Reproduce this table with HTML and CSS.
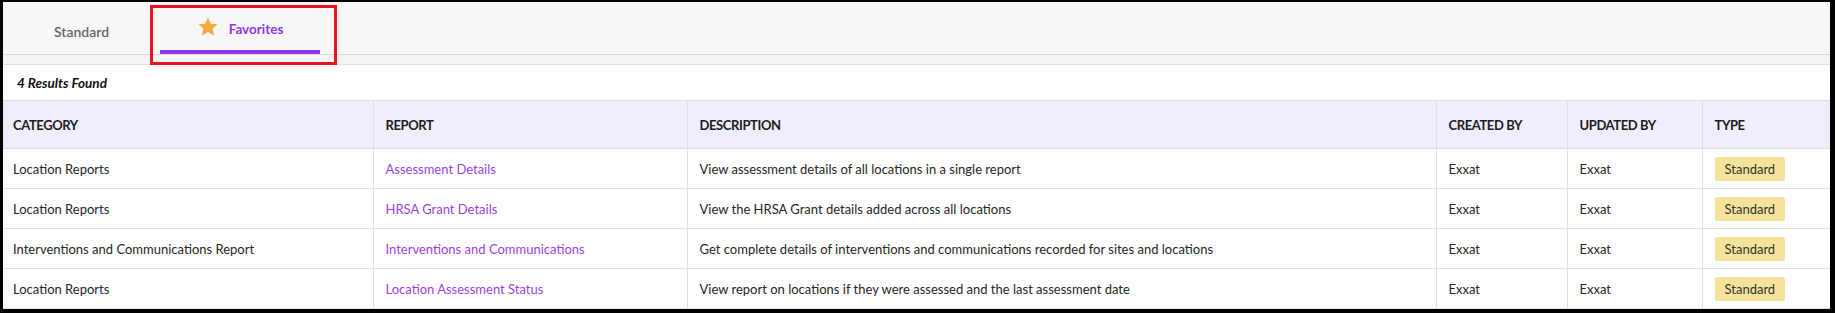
FILE: index.html
```html
<!DOCTYPE html>
<html lang="en">
<head>
    <meta charset="UTF-8">
    <title>Reports - Favorites</title>
    <link rel="stylesheet" href="styles.css">
</head>
<body>
    <div class="frame">
        <div class="tabs">
            <div class="tab">Standard</div>
            <div class="tab active">
                <svg class="star" viewBox="0 0 24 24" width="22" height="22">
                    <path d="M12 1.5l3.1 7 7.4.6-5.6 4.9 1.7 7.3L12 17.4l-6.6 3.9 1.7-7.3L1.5 9.1l7.4-.6z" fill="#f4a93c"/>
                </svg>
                <span>Favorites</span>
            </div>
            <div class="highlight"></div>
        </div>

        <div class="card">
            <div class="results">4 Results Found</div>
            <table class="reports">
                <colgroup>
                    <col style="width: 370px">
                    <col style="width: 314px">
                    <col style="width: 749px">
                    <col style="width: 131px">
                    <col style="width: 135px">
                    <col>
                </colgroup>
                <thead>
                    <tr>
                        <th>Category</th>
                        <th>Report</th>
                        <th>Description</th>
                        <th>Created By</th>
                        <th>Updated By</th>
                        <th>Type</th>
                    </tr>
                </thead>
                <tbody>
                    <tr>
                        <td>Location Reports</td>
                        <td><a href="#" class="report-link">Assessment Details</a></td>
                        <td>View assessment details of all locations in a single report</td>
                        <td>Exxat</td>
                        <td>Exxat</td>
                        <td><span class="badge">Standard</span></td>
                    </tr>
                    <tr>
                        <td>Location Reports</td>
                        <td><a href="#" class="report-link">HRSA Grant Details</a></td>
                        <td>View the HRSA Grant details added across all locations</td>
                        <td>Exxat</td>
                        <td>Exxat</td>
                        <td><span class="badge">Standard</span></td>
                    </tr>
                    <tr>
                        <td>Interventions and Communications Report</td>
                        <td><a href="#" class="report-link">Interventions and Communications</a></td>
                        <td>Get complete details of interventions and communications recorded for sites and locations</td>
                        <td>Exxat</td>
                        <td>Exxat</td>
                        <td><span class="badge">Standard</span></td>
                    </tr>
                    <tr>
                        <td>Location Reports</td>
                        <td><a href="#" class="report-link">Location Assessment Status</a></td>
                        <td>View report on locations if they were assessed and the last assessment date</td>
                        <td>Exxat</td>
                        <td>Exxat</td>
                        <td><span class="badge">Standard</span></td>
                    </tr>
                </tbody>
            </table>
        </div>
    </div>
</body>
</html>
```

FILE: styles.css
```css
* {
    margin: 0;
    padding: 0;
    box-sizing: border-box;
}

body {
    font-family: Lato, 'Liberation Sans', sans-serif;
    font-size: 13px;
    color: #262626;
    background: #000;
}

.frame {
    height: 313px;
    border-style: solid;
    border-color: #000;
    border-width: 2px 5px 4px 3px;
    background: #f4f4f4;
    display: flex;
    flex-direction: column;
}

.tabs {
    position: relative;
    display: flex;
    height: 53px;
    background: #f7f7f7;
    border-bottom: 1px solid #d9d9d9;
}

.tab {
    width: 157px;
    display: flex;
    align-items: center;
    justify-content: center;
    gap: 10px;
    padding-top: 7px;
    font-size: 14px;
    font-weight: 600;
    color: #666;
}

.tab.active {
    width: 160px;
    color: #9234e8;
    font-size: 13.5px;
    font-weight: 700;
    padding-top: 5px;
    border-bottom: 4px solid #9234e8;
}

.star {
    display: block;
    margin-top: -3px;
}

.highlight {
    position: absolute;
    left: 147px;
    top: 3px;
    width: 187px;
    height: 60px;
    border: 3px solid #e8131d;
}

.card {
    flex: 1;
    margin-top: 9px;
    background: #fff;
    border-top: 1px solid #e2e2e2;
}

.results {
    height: 35px;
    display: flex;
    align-items: center;
    padding-left: 14px;
    font-size: 13.5px;
    font-style: italic;
    font-weight: 700;
    color: #111;
}

.reports {
    width: 100%;
    border-collapse: collapse;
    table-layout: fixed;
}

.reports th,
.reports td {
    text-align: left;
    padding: 0 12px;
    border-left: 1px solid #e0e0e0;
    white-space: nowrap;
    overflow: hidden;
}

.reports th:first-child,
.reports td:first-child {
    border-left: none;
    padding-left: 10px;
}

.reports th {
    height: 48px;
    background: #eeeefc;
    border-top: 1px solid #dcdcec;
    border-bottom: 1px solid #dcdcec;
    border-left-color: #dcdcec;
    font-weight: 700;
    letter-spacing: -0.4px;
    text-transform: uppercase;
    color: #1c1c1c;
}

.reports td {
    height: 40px;
    border-bottom: 1px solid #e0e0e0;
}

.report-link {
    color: #9d3fe6;
    text-decoration: none;
}

.badge {
    display: inline-block;
    height: 24px;
    line-height: 24px;
    padding: 0 10px;
    border-radius: 3px;
    background: #f6e39b;
    color: #333;
}
```
